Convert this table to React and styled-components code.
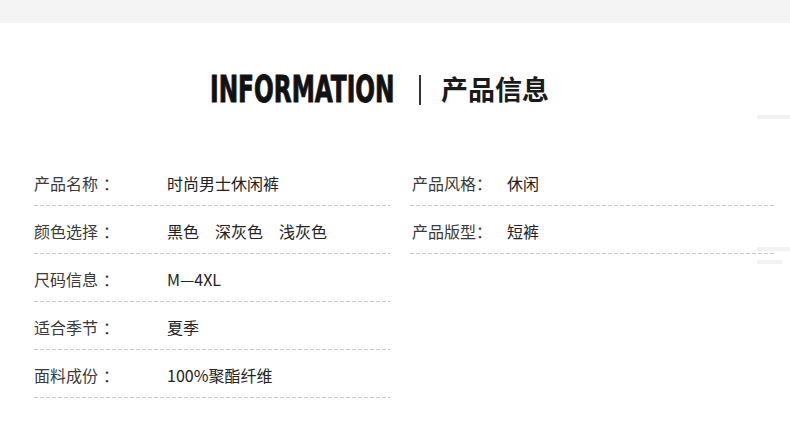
import React from "react";
import styled, { createGlobalStyle } from "styled-components";

const GlobalStyle = createGlobalStyle`
  html, body {
    margin: 0;
    padding: 0;
    background: #ffffff;
  }
  body {
    font-family: "Liberation Sans", "Noto Sans CJK SC", sans-serif;
  }
`;

const leftRows = [
  { label: "产品名称", value: "时尚男士休闲裤" },
  { label: "颜色选择", value: "黑色\u3000深灰色\u3000浅灰色" },
  { label: "尺码信息", value: "M—4XL" },
  { label: "适合季节", value: "夏季" },
  { label: "面料成份", value: "100%聚酯纤维" },
];

const rightRows = [
  { label: "产品风格", value: "休闲" },
  { label: "产品版型", value: "短裤" },
];

const App = () => {
  return (
    <>
      <GlobalStyle />
      <Page>
        <TopBand />
        <Header>
          <TitleEn>INFORMATION</TitleEn>
          <Divider />
          <TitleCn>产品信息</TitleCn>
        </Header>
        <Columns>
          <Column $width={356}>
            {leftRows.map((row, index) => (
              <Row key={index}>
                <Label $width={133}>
                  {row.label}
                  <Colon $gap={5}>：</Colon>
                </Label>
                <Value>{row.value}</Value>
              </Row>
            ))}
          </Column>
          <Column $width={365}>
            {rightRows.map((row, index) => (
              <Row key={index}>
                <Label $width={97} $indent={2}>
                  {row.label}
                  <Colon $gap={0}>：</Colon>
                </Label>
                <Value>{row.value}</Value>
              </Row>
            ))}
          </Column>
        </Columns>
        <EdgeMark $top={115} $width={33} />
        <EdgeMark $top={247} $width={33} />
        <EdgeMark $top={260} $width={25} $offset={8} />
      </Page>
    </>
  );
};

export default App;

const Page = styled.div`
  position: relative;
  width: 790px;
  height: 423px;
  overflow: hidden;
  background: #ffffff;
`;

const TopBand = styled.div`
  height: 23px;
  background: #f4f4f4;
`;

const Header = styled.div`
  box-sizing: border-box;
  height: 136px;
  padding: 46px 0 0 210px;
  display: flex;
  align-items: flex-start;
`;

const TitleEn = styled.div`
  font-family: "DejaVu Sans Condensed", "Liberation Sans", sans-serif;
  font-weight: 700;
  font-size: 38px;
  line-height: 40px;
  color: #111111;
  -webkit-text-stroke: 0.9px #111111;
  transform: scaleX(0.68);
  transform-origin: left center;
  width: 186px;
  white-space: nowrap;
`;

const Divider = styled.span`
  display: block;
  width: 2px;
  height: 30px;
  margin: 6px 20px 0 23px;
  background: #333333;
`;

const TitleCn = styled.div`
  font-family: "Noto Sans CJK SC", sans-serif;
  font-weight: 700;
  font-size: 27px;
  line-height: 40px;
  color: #1a1a1a;
`;

const Columns = styled.div`
  display: flex;
  gap: 20px;
  padding-left: 34px;
`;

const Column = styled.div`
  width: ${(p) => p.$width}px;
  display: flex;
  flex-direction: column;
`;

const Row = styled.div`
  box-sizing: border-box;
  height: 48px;
  padding-top: 14px;
  display: flex;
  align-items: flex-start;
  background-image: linear-gradient(to right, #c8c8c8 0 4px, transparent 4px 6px);
  background-size: 6px 1px;
  background-repeat: repeat-x;
  background-position: left bottom 1px;
`;

const Label = styled.div`
  box-sizing: border-box;
  width: ${(p) => p.$width}px;
  padding-left: ${(p) => p.$indent || 0}px;
  font-family: "Noto Sans CJK SC", sans-serif;
  font-size: 16px;
  line-height: 20px;
  color: #3a3a3a;
  white-space: nowrap;
`;

const Colon = styled.span`
  margin-left: ${(p) => p.$gap}px;
`;

const Value = styled.div`
  font-family: "Noto Sans CJK SC", sans-serif;
  font-size: 16px;
  line-height: 20px;
  color: #222222;
  white-space: pre;
`;

const EdgeMark = styled.div`
  position: absolute;
  right: ${(p) => p.$offset || 0}px;
  top: ${(p) => p.$top}px;
  width: ${(p) => p.$width}px;
  height: 4px;
  background: #f2f2f2;
`;
